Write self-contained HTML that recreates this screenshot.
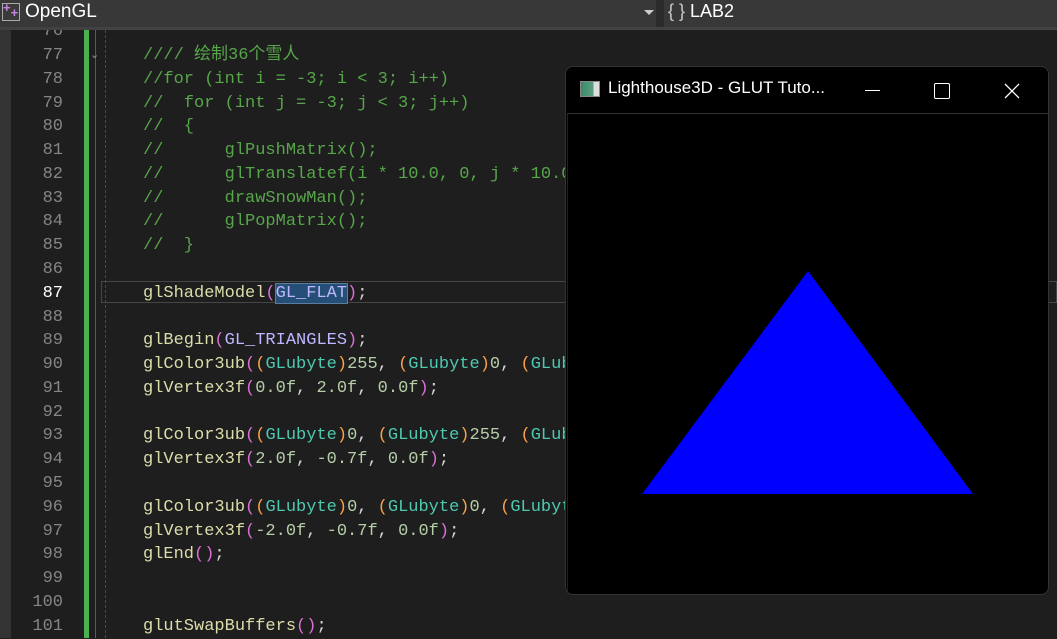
<!DOCTYPE html><html><head><meta charset="utf-8"><style>
body{margin:0;width:1057px;height:638px;overflow:hidden;background:#1e1e1e;position:relative;font-family:"Liberation Mono","Noto Sans CJK SC",monospace}
.top{position:absolute;left:0;top:0;width:1057px;height:27px;background:#383838;border-bottom:3px solid #424242}
.l{position:absolute;left:0;height:24px;line-height:24px;font-size:17px;white-space:pre;width:1057px;margin-top:2px}
.n{position:absolute;width:63px;text-align:right;color:#858585;left:0}
.c{position:absolute;left:143px}
.cm{color:#57a64a}.f{color:#dcdcaa}.m{color:#beb7ff}.t{color:#4ec9b0}.d{color:#d4d4d4}.y{color:#ffd700}.p{color:#da70d6}.o{color:#f9a14a}.num{color:#b5cea8}
</style></head><body>
<div style="position:absolute;left:0;top:30px;width:11px;height:608px;background:#333"></div>
<div style="position:absolute;left:84px;top:30px;width:5px;height:608px;background:#4caf50"></div>
<div style="position:absolute;left:95px;top:30px;width:1px;height:608px;background:#5a5a5a"></div>
<div style="position:absolute;left:105px;top:30px;height:608px;border-left:1px dashed #4a4a4a"></div>
<div style="position:absolute;left:101px;top:281px;width:956px;height:22px;border:1px solid #464646;box-sizing:border-box"></div>
<div class="l" style="top:18px"><span class="n">76</span></div>
<div class="l" style="top:42px"><span class="n">77</span><span style="position:absolute;left:90px;color:#999;font-size:11px">⌄</span><span class="c cm">//// 绘制36个雪人</span></div>
<div class="l" style="top:66px"><span class="n">78</span><span class="c cm">//for (int i = -3; i &lt; 3; i++)</span></div>
<div class="l" style="top:90px"><span class="n">79</span><span class="c cm">//  for (int j = -3; j &lt; 3; j++)</span></div>
<div class="l" style="top:113px"><span class="n">80</span><span class="c cm">//  {</span></div>
<div class="l" style="top:137px"><span class="n">81</span><span class="c cm">//      glPushMatrix();</span></div>
<div class="l" style="top:161px"><span class="n">82</span><span class="c cm">//      glTranslatef(i * 10.0, 0, j * 10.0);</span></div>
<div class="l" style="top:185px"><span class="n">83</span><span class="c cm">//      drawSnowMan();</span></div>
<div class="l" style="top:208px"><span class="n">84</span><span class="c cm">//      glPopMatrix();</span></div>
<div class="l" style="top:232px"><span class="n">85</span><span class="c cm">//  }</span></div>
<div class="l" style="top:256px"><span class="n">86</span></div>
<div class="l" style="top:280px"><span class="n" style="color:#fff">87</span><span class="c"><span class="f">glShadeModel</span><span class="p">(</span><span class="m" style="background:#264f78;outline:1px solid #5a7da0">GL_FLAT</span><span class="p">)</span><span class="d">;</span></span></div>
<div class="l" style="top:304px"><span class="n">88</span></div>
<div class="l" style="top:327px"><span class="n">89</span><span class="c"><span class="f">glBegin</span><span class="p">(</span><span class="m">GL_TRIANGLES</span><span class="p">)</span><span class="d">;</span></span></div>
<div class="l" style="top:351px"><span class="n">90</span><span class="c"><span class="f">glColor3ub</span><span class="p">(</span><span class="o">(</span><span class="t">GLubyte</span><span class="o">)</span><span class="num">255</span><span class="d">, </span><span class="o">(</span><span class="t">GLubyte</span><span class="o">)</span><span class="num">0</span><span class="d">, </span><span class="o">(</span><span class="t">GLubyte</span></span></div>
<div class="l" style="top:375px"><span class="n">91</span><span class="c"><span class="f">glVertex3f</span><span class="p">(</span><span class="num">0.0f</span><span class="d">, </span><span class="num">2.0f</span><span class="d">, </span><span class="num">0.0f</span><span class="p">)</span><span class="d">;</span></span></div>
<div class="l" style="top:399px"><span class="n">92</span></div>
<div class="l" style="top:422px"><span class="n">93</span><span class="c"><span class="f">glColor3ub</span><span class="p">(</span><span class="o">(</span><span class="t">GLubyte</span><span class="o">)</span><span class="num">0</span><span class="d">, </span><span class="o">(</span><span class="t">GLubyte</span><span class="o">)</span><span class="num">255</span><span class="d">, </span><span class="o">(</span><span class="t">GLubyte</span></span></div>
<div class="l" style="top:446px"><span class="n">94</span><span class="c"><span class="f">glVertex3f</span><span class="p">(</span><span class="num">2.0f</span><span class="d">, </span><span class="num">-0.7f</span><span class="d">, </span><span class="num">0.0f</span><span class="p">)</span><span class="d">;</span></span></div>
<div class="l" style="top:470px"><span class="n">95</span></div>
<div class="l" style="top:494px"><span class="n">96</span><span class="c"><span class="f">glColor3ub</span><span class="p">(</span><span class="o">(</span><span class="t">GLubyte</span><span class="o">)</span><span class="num">0</span><span class="d">, </span><span class="o">(</span><span class="t">GLubyte</span><span class="o">)</span><span class="num">0</span><span class="d">, </span><span class="o">(</span><span class="t">GLubyte</span></span></div>
<div class="l" style="top:518px"><span class="n">97</span><span class="c"><span class="f">glVertex3f</span><span class="p">(</span><span class="num">-2.0f</span><span class="d">, </span><span class="num">-0.7f</span><span class="d">, </span><span class="num">0.0f</span><span class="p">)</span><span class="d">;</span></span></div>
<div class="l" style="top:541px"><span class="n">98</span><span class="c"><span class="f">glEnd</span><span class="p">()</span><span class="d">;</span></span></div>
<div class="l" style="top:565px"><span class="n">99</span></div>
<div class="l" style="top:589px"><span class="n">100</span></div>
<div class="l" style="top:613px"><span class="n">101</span><span class="c"><span class="f">glutSwapBuffers</span><span class="p">()</span><span class="d">;</span></span></div>
<div class="top"></div>
<div style="position:absolute;left:656px;top:0;width:8px;height:27px;background:#2b2b2b"></div>
<div style="position:absolute;left:2px;top:3px;width:16px;height:16px;border:1px solid #aaa;background:#3a3a3a"></div>
<div style="position:absolute;left:3px;top:0px;color:#c586e0;font:bold 13px 'Liberation Sans';">+<span style="position:relative;top:5px">+</span></div>
<div style="position:absolute;left:25px;top:1px;color:#fff;font:19px 'Liberation Sans',sans-serif">OpenGL</div>
<div style="position:absolute;left:644px;top:10px;width:0;height:0;border-left:5px solid transparent;border-right:5px solid transparent;border-top:5px solid #ccc"></div>
<div style="position:absolute;left:668px;top:1px;color:#ccc;font:18px 'Liberation Sans'">{ } <span style="color:#fff">LAB2</span></div>
<div style="position:absolute;left:565px;top:66px;width:484px;height:529px;background:#000;border-radius:8px;border:1px solid #333;box-sizing:border-box;overflow:hidden">
<div style="position:absolute;left:14px;top:14px;width:20px;height:16px;background:linear-gradient(90deg,#3a8a6a,#5aa080 70%,#ddd 70%);border:1px solid #888;box-sizing:border-box"></div>
<div style="position:absolute;left:42px;top:11px;color:#fff;font:17px 'Liberation Sans',sans-serif">Lighthouse3D - GLUT Tuto...</div>
<div style="position:absolute;left:299px;top:23px;width:15px;height:1px;background:#fff"></div>
<div style="position:absolute;left:368px;top:16px;width:14px;height:14px;border:1px solid #fff;border-radius:2px"></div>
<svg style="position:absolute;left:438px;top:16px" width="16" height="16"><path d="M1 1L15 15M15 1L1 15" stroke="#fff" stroke-width="1.3"/></svg>
<div style="position:absolute;left:1px;top:46px;width:480px;height:480px;border-top:1px solid #333;border-left:1px solid #222;border-right:1px solid #222"></div>
<svg style="position:absolute;left:0;top:0" width="484" height="529"><polygon points="242,204 76,427 407,427" fill="#0000ff"/></svg>
</div>
</body></html>
